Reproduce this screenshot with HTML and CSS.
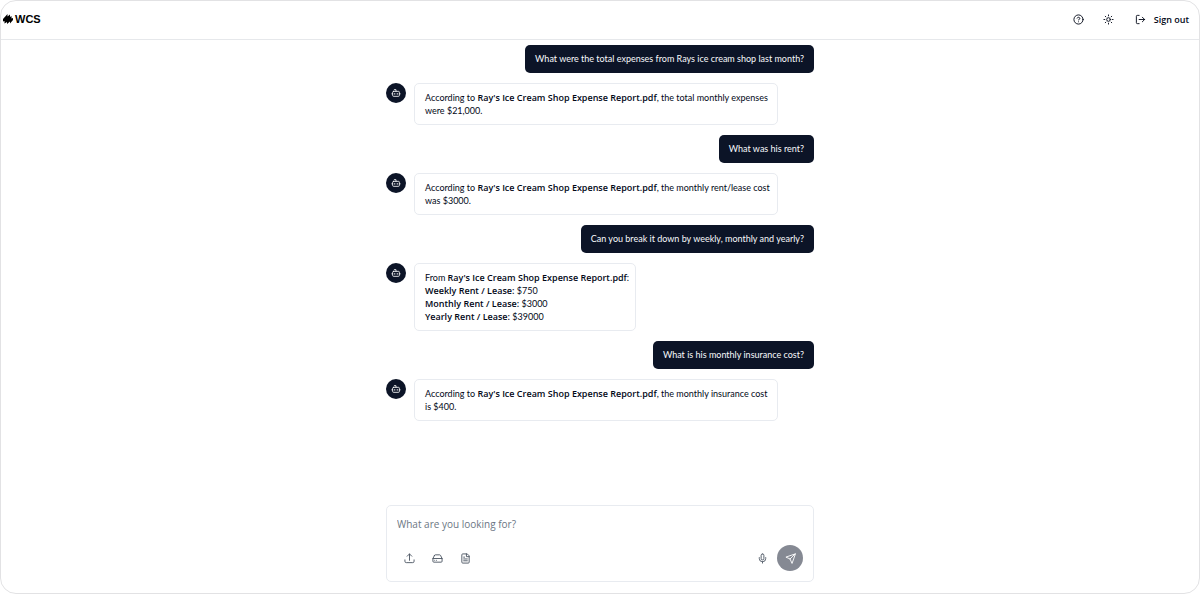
FILE: index.html
```html
<!DOCTYPE html>
<html lang="en">
<head>
  <meta charset="UTF-8" />
  <meta name="viewport" content="width=device-width, initial-scale=1.0" />
  <title>WCS</title>
  <link rel="stylesheet" href="styles.css">
</head>
<body>
  <!-- shared icons -->
  <svg class="sprite" aria-hidden="true">
    <symbol id="bot" viewBox="0 0 24 24">
      <path d="M12 8V4H8" />
      <rect x="4" y="8" width="16" height="12" rx="2" />
      <path d="M2 14h2M20 14h2M15 13v2M9 13v2" />
    </symbol>
  </svg>

  <div class="app">
    <header class="topbar">
      <a class="logo" href="#">
        <svg viewBox="0 0 20 22" aria-hidden="true"><path d="M0 11 9 1v5l5-4v5l3-2v5l3-1v4l-6 7v-4l-6 5v-4l-5 3v-5l-3 1z" /></svg>
        <span>WCS</span>
      </a>
      <nav class="actions">
        <button class="icon-btn" aria-label="Help">
          <svg class="icon" viewBox="0 0 24 24"><circle cx="12" cy="12" r="10" /><path d="M9.1 9a3 3 0 0 1 5.8 1c0 2-3 3-3 3M12 17h.01" /></svg>
        </button>
        <button class="icon-btn" aria-label="Toggle theme">
          <svg class="icon" viewBox="0 0 24 24"><circle cx="12" cy="12" r="4" /><path d="M12 2v2M12 20v2M4.9 4.9l1.4 1.4M17.7 17.7l1.4 1.4M2 12h2M20 12h2M6.3 17.7l-1.4 1.4M19.1 4.9l-1.4 1.4" /></svg>
        </button>
        <button class="sign-out">
          <svg class="icon" viewBox="0 0 24 24"><path d="M9 21H5a2 2 0 0 1-2-2V5a2 2 0 0 1 2-2h4M16 17l5-5-5-5M21 12H9" /></svg>
          Sign out
        </button>
      </nav>
    </header>

    <main class="chat">
      <div class="messages">
        <div class="bubble user">What were the total expenses from Rays ice cream shop last month?</div>
        <div class="reply">
          <span class="avatar"><svg class="icon"><use href="#bot" /></svg></span>
          <div class="bubble bot">According to <strong>Ray's Ice Cream Shop Expense Report.pdf</strong>, the total monthly expenses were $21,000.</div>
        </div>

        <div class="bubble user">What was his rent?</div>
        <div class="reply">
          <span class="avatar"><svg class="icon"><use href="#bot" /></svg></span>
          <div class="bubble bot">According to <strong>Ray's Ice Cream Shop Expense Report.pdf</strong>, the monthly rent/lease cost was $3000.</div>
        </div>

        <div class="bubble user">Can you break it down by weekly, monthly and yearly?</div>
        <div class="reply">
          <span class="avatar"><svg class="icon"><use href="#bot" /></svg></span>
          <div class="bubble bot">
            From <strong>Ray's Ice Cream Shop Expense Report.pdf</strong>:<br>
            <strong>Weekly Rent / Lease:</strong> $750<br>
            <strong>Monthly Rent / Lease:</strong> $3000<br>
            <strong>Yearly Rent / Lease:</strong> $39000
          </div>
        </div>

        <div class="bubble user">What is his monthly insurance cost?</div>
        <div class="reply">
          <span class="avatar"><svg class="icon"><use href="#bot" /></svg></span>
          <div class="bubble bot">According to <strong>Ray's Ice Cream Shop Expense Report.pdf</strong>, the monthly insurance cost is $400.</div>
        </div>
      </div>

      <form class="composer">
        <input class="prompt" type="text" placeholder="What are you looking for?" aria-label="Message">
        <div class="tools">
          <button class="icon-btn" type="button" aria-label="Upload">
            <svg class="icon" viewBox="0 0 24 24"><path d="M2 15v3a3 3 0 0 0 3 3h14a3 3 0 0 0 3-3v-3M7 7l5-5 5 5M12 2v14" /></svg>
          </button>
          <button class="icon-btn" type="button" aria-label="Drive">
            <svg class="icon" viewBox="0 0 24 24"><path d="M2 12h20M5.5 5.1 2 12v6a2 2 0 0 0 2 2h16a2 2 0 0 0 2-2v-6l-3.5-6.9A2 2 0 0 0 16.8 4H7.2a2 2 0 0 0-1.7 1.1zM6 16h.01M10 16h.01" /></svg>
          </button>
          <button class="icon-btn" type="button" aria-label="Documents">
            <svg class="icon" viewBox="0 0 24 24"><path d="M15 2H6a2 2 0 0 0-2 2v16a2 2 0 0 0 2 2h12a2 2 0 0 0 2-2V7zM14 2v6h6M8 9h2M8 13h8M8 17h8" /></svg>
          </button>
          <button class="icon-btn mic" type="button" aria-label="Voice input">
            <svg class="icon" viewBox="0 0 24 24"><rect x="9" y="2" width="6" height="13" rx="3" /><path d="M19 10v2a7 7 0 0 1-14 0v-2M12 19v3" /></svg>
          </button>
          <button class="send" type="submit" aria-label="Send">
            <svg class="icon" viewBox="0 0 24 24"><path d="M22 2 2 9l9 4 4 9zM22 2 11 13" /></svg>
          </button>
        </div>
      </form>
    </main>
  </div>
</body>
</html>
```
FILE: styles.css
```css
* {
  box-sizing: border-box;
}
body {
  margin: 0;
  background: #fff;
  color: #020817;
  font-family: Lato, "Open Sans", sans-serif;
  font-size: 9px;
}
button {
  display: flex;
  align-items: center;
  justify-content: center;
  padding: 0;
  border: 0;
  background: none;
  color: inherit;
  font: inherit;
  cursor: pointer;
}
strong {
  font-family: "Open Sans", sans-serif;
  font-weight: 600;
  line-height: 10px;
}
.sprite {
  display: none;
}
.icon {
  width: 11px;
  height: 11px;
  fill: none;
  stroke: currentColor;
  stroke-width: 2;
  stroke-linecap: round;
  stroke-linejoin: round;
}
.app {
  display: flex;
  flex-direction: column;
  min-height: 100vh;
  border: 1px solid #e2e2e4;
  border-radius: 16px;
}

/* header */
.topbar {
  display: flex;
  align-items: center;
  justify-content: space-between;
  height: 39px;
  padding: 0 10px 2px 2px;
  border-bottom: 1px solid #e6e8eb;
}
.logo {
  display: flex;
  align-items: center;
  gap: 2px;
  color: #000;
  font-family: "Liberation Sans", Arial, sans-serif;
  font-size: 11px;
  font-weight: 700;
  text-decoration: none;
}
.logo svg {
  width: 10px;
  height: 12px;
}
.actions {
  display: flex;
  align-items: center;
  gap: 10px;
}
.icon-btn {
  width: 20px;
  height: 20px;
}
.sign-out {
  gap: 8px;
  padding-left: 6px;
  font-family: "Open Sans", sans-serif;
  font-weight: 600;
}

/* conversation */
.chat {
  display: flex;
  flex: 1;
  flex-direction: column;
  width: 100%;
  max-width: 428px;
  margin: 0 auto;
  padding: 5px 0 11px;
}
.messages {
  display: flex;
  flex: 1;
  flex-direction: column;
  gap: 10px;
  padding-bottom: 20px;
}
.bubble {
  border-radius: 5px;
}
.user {
  align-self: flex-end;
  padding: 8px 10px;
  background: #0c1427;
  color: #f8fafc;
  line-height: 12px;
}
.reply {
  display: flex;
  align-items: flex-start;
  gap: 8px;
}
.avatar {
  display: flex;
  flex: none;
  align-items: center;
  justify-content: center;
  width: 20px;
  height: 20px;
  border-radius: 50%;
  background: #0c1427;
  color: #fff;
}
.avatar .icon {
  width: 10px;
  height: 10px;
}
.bot {
  max-width: 85%;
  padding: 7px 6px 7px 10px;
  border: 1px solid #e8ebf0;
  line-height: 13px;
}

/* message box */
.composer {
  padding: 10px;
  border: 1px solid #e8ebf0;
  border-radius: 5px;
}
.prompt {
  display: block;
  width: 100%;
  height: 16px;
  padding: 0;
  border: 0;
  outline: 0;
  background: none;
  color: inherit;
  font-family: "Open Sans", sans-serif;
  font-size: 10px;
}
.prompt::placeholder {
  color: #6b7683;
  opacity: 1;
}
.tools {
  display: flex;
  align-items: center;
  gap: 8px;
  margin-top: 13px;
  padding-left: 2px;
  color: #4b5563;
}
.mic {
  width: 14px;
  margin-left: auto;
}
.send {
  width: 26px;
  height: 26px;
  border-radius: 50%;
  background: #858993;
  color: #fff;
}
```
